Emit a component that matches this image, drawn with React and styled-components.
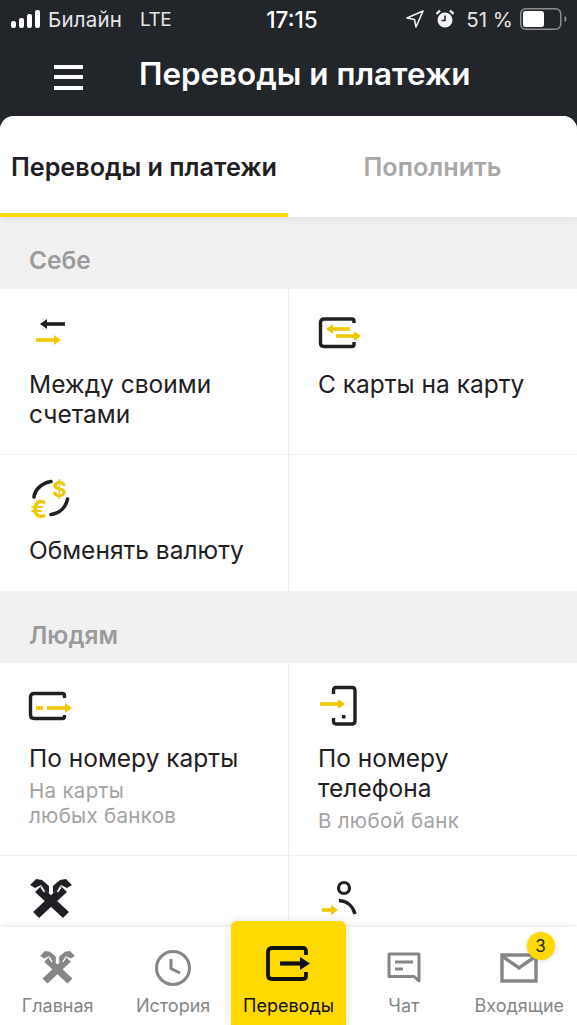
import React from 'react';
import styled, { createGlobalStyle } from 'styled-components';

const YELLOW = '#eec800';
const DARK = '#1f2023';
const GREY = '#868686';

const GlobalStyle = createGlobalStyle`
  html, body {
    margin: 0;
    padding: 0;
    background: #222529;
  }
  * {
    box-sizing: border-box;
  }
`;

const Page = styled.div`
  width: 577px;
  height: 1025px;
  display: flex;
  flex-direction: column;
  overflow: hidden;
  background: #222529;
  font-family: Inter, 'Liberation Sans', sans-serif;
  color: ${DARK};
`;

const StatusBar = styled.div`
  height: 38px;
  padding: 0 10px 0 11px;
  display: grid;
  grid-template-columns: 1fr auto 1fr;
  align-items: center;
  color: #e6e6e6;
  font-size: 20.5px;
`;

const StatusLeft = styled.div`
  display: flex;
  align-items: center;
`;

const Carrier = styled.span`
  margin-left: 7px;
  width: 92px;
  letter-spacing: 0.2px;
`;

const Network = styled.span`
  font-size: 19px;
  letter-spacing: -0.5px;
`;

const Clock = styled.span`
  padding-left: 6px;
  font-size: 22.5px;
  font-weight: 500;
  color: #fff;
`;

const StatusRight = styled.div`
  display: flex;
  align-items: center;
  justify-content: flex-end;
`;

const Percent = styled.span`
  margin: 0 7px 0 12px;
`;

const NavBar = styled.div`
  height: 78px;
  padding-left: 54px;
  display: flex;
  align-items: center;
`;

const Burger = styled.div`
  width: 29px;
  height: 25px;
  margin-right: 56px;
  display: flex;
  flex-direction: column;
  justify-content: space-between;

  span {
    display: block;
    height: 4px;
    background: #fff;
  }
`;

const Title = styled.h1`
  margin: 0 0 6px;
  color: #fff;
  font-size: 31.4px;
  font-weight: 600;
  white-space: nowrap;
`;

const Sheet = styled.div`
  flex: 1;
  min-height: 0;
  overflow: hidden;
  background: #f1f1f1;
  border-radius: 14px 14px 0 0;
`;

const Tabs = styled.div`
  height: 101px;
  display: grid;
  grid-template-columns: 288px 1fr;
  background: #fff;
  box-shadow: 0 2px 8px rgba(0, 0, 0, 0.08);
  position: relative;
`;

const TabItem = styled.div`
  padding-top: 36px;
  text-align: center;
  font-size: 25.2px;
  line-height: 30px;
  font-weight: 600;
  color: ${p => (p.$active ? DARK : '#a8a8a8')};
  border-bottom: 4px solid ${p => (p.$active ? '#ffd900' : 'transparent')};
`;

const SectionLabel = styled.div`
  height: 72px;
  padding-top: ${p => (p.$first ? '28px' : '29px')};
  padding-left: 29px;
  font-size: 24.5px;
  line-height: 30px;
  font-weight: 600;
  color: #9b9b9b;
`;

const Grid = styled.div`
  display: grid;
  grid-template-columns: 289px 288px;
  background: #fff;
`;

const Cell = styled.div`
  padding: 20px 20px ${p => (p.$last ? '26px' : '25px')} 29px;
  border-right: ${p => (p.$right ? 'none' : '1px solid #efefef')};
  border-bottom: ${p => (p.$last ? 'none' : '1px solid #efefef')};
`;

const IconSlot = styled.div`
  height: 44px;
  margin-bottom: 16px;
  margin-left: 1px;

  svg {
    display: block;
    overflow: visible;
  }
`;

const CellTitle = styled.div`
  font-size: 24.5px;
  line-height: 30px;
  white-space: pre-line;
`;

const CellSub = styled.div`
  margin-top: 5px;
  margin-bottom: -3px;
  font-size: 20.5px;
  line-height: 25px;
  color: #a3a3a3;
  white-space: pre-line;
  letter-spacing: 0.3px;
`;

const BottomBar = styled.div`
  flex: none;
  height: 98px;
  display: grid;
  grid-template-columns: repeat(5, 1fr);
  background: #fff;
  box-shadow: 0 -1px 5px rgba(0, 0, 0, 0.1);
  position: relative;
`;

const BarTab = styled.div`
  position: relative;
  display: flex;
  flex-direction: column;
  align-items: center;
  padding-top: ${p => (p.$active ? '27px' : '21px')};
  margin-top: ${p => (p.$active ? '-6px' : '0')};
  background: ${p => (p.$active ? '#ffd900' : 'transparent')};
  border-radius: ${p => (p.$active ? '6px 6px 0 0' : '0')};
  box-shadow: ${p => (p.$active ? '0 0 10px rgba(0, 0, 0, 0.12)' : 'none')};
`;

const BarIcon = styled.div`
  height: 40px;
  display: flex;
  align-items: center;
  justify-content: center;
`;

const BarLabel = styled.span`
  margin-top: 6px;
  font-size: 18px;
  line-height: 24px;
  color: ${p => (p.$active ? '#111' : GREY)};
`;

const Badge = styled.span`
  position: absolute;
  top: 5px;
  left: 65px;
  width: 28px;
  height: 28px;
  border-radius: 50%;
  background: #ffd900;
  box-shadow: 0 1px 4px rgba(0, 0, 0, 0.15);
  display: flex;
  align-items: center;
  justify-content: center;
  font-size: 17px;
  color: #222;
`;

const SignalIcon = () => (
  <svg width="30" height="18" viewBox="0 0 30 18">
    <rect x="0" y="11" width="5" height="7" rx="2" fill="#fff" />
    <rect x="8" y="8" width="5" height="10" rx="2" fill="#fff" />
    <rect x="16" y="4" width="5" height="14" rx="2" fill="#fff" />
    <rect x="24" y="0" width="5" height="18" rx="2" fill="#fff" />
  </svg>
);

const LocationIcon = () => (
  <svg width="18" height="18" viewBox="0 0 18 18" fill="none">
    <path d="M17 1 L1 8 L8.5 9.5 L10 17 Z" stroke="#eee" strokeWidth="1.6" strokeLinejoin="round" />
  </svg>
);

const AlarmSvg = styled.svg`
  margin-left: 12px;
`;

const AlarmIcon = () => (
  <AlarmSvg width="18" height="20" viewBox="0 0 18 20">
    <circle cx="9" cy="11" r="7.5" fill="#f2f2f2" />
    <path d="M9 6.5 V11.5 H5.5" stroke="#222529" strokeWidth="1.6" fill="none" />
    <path d="M0.5 5 L4 1.5 M17.5 5 L14 1.5" stroke="#f2f2f2" strokeWidth="2.4" />
  </AlarmSvg>
);

const BatteryIcon = () => (
  <svg width="47" height="22" viewBox="0 0 47 22">
    <rect x="0.75" y="0.75" width="40" height="20.5" rx="5" fill="none" stroke="#8d8f91" strokeWidth="1.5" />
    <rect x="3" y="3" width="21" height="16" rx="2.5" fill="#fff" />
    <path d="M44.5 8 C46 8.5 46.5 9.5 46.5 11 C46.5 12.5 46 13.5 44.5 14 Z" fill="#8d8f91" />
  </svg>
);

const ArrowLine = ({ x1, x2, y, color, left }) => {
  const tip = left ? x1 : x2;
  const dir = left ? 1 : -1;
  return (
    <g>
      <path d={`M${x1 + (left ? 3 : 0)} ${y} H${x2 - (left ? 0 : 3)}`} stroke={color} strokeWidth="3.6" />
      <path d={`M${tip} ${y} L${tip + dir * 7} ${y - 5} V${y + 5} Z`} fill={color} />
    </g>
  );
};

const BetweenIcon = () => (
  <svg width="60" height="44" viewBox="0 0 60 44">
    <ArrowLine x1={10} x2={35} y={15} color={DARK} left />
    <ArrowLine x1={6} x2={31} y={31} color={YELLOW} />
  </svg>
);

const CardToCardIcon = () => (
  <svg width="60" height="44" viewBox="0 0 60 44" fill="none">
    <path d="M35 14 V12 Q35 10 33 10 H5 Q1.5 10 1.5 13.5 V34 Q1.5 37.5 5 37.5 H33 Q35 37.5 35 35.5 V33" stroke={DARK} strokeWidth="3.4" />
    <ArrowLine x1={7} x2={31} y={20} color={YELLOW} left />
    <ArrowLine x1={17} x2={42} y={27} color={YELLOW} />
  </svg>
);

const ExchangeIcon = () => (
  <svg width="60" height="44" viewBox="0 0 60 44" fill="none">
    <path d="M4 22 C5 14 12 8 21 6.5" stroke={DARK} strokeWidth="3.6" strokeLinecap="round" />
    <path d="M37.5 24 C36 32 30 38 21 39.5" stroke={DARK} strokeWidth="3.6" strokeLinecap="round" />
    <text x="29.5" y="22" fontSize="22" fontWeight="700" fontFamily="Inter, sans-serif" textAnchor="middle" fill={YELLOW}>$</text>
    <text x="9" y="43" fontSize="24" fontWeight="700" fontFamily="Inter, sans-serif" textAnchor="middle" fill={YELLOW}>€</text>
  </svg>
);

const CardNumberIcon = () => (
  <svg width="60" height="44" viewBox="0 0 60 44" fill="none">
    <path d="M34.5 15 V12.5 Q34.5 10.5 32.5 10.5 H4 Q0.5 10.5 0.5 14 V32 Q0.5 35.5 4 35.5 H32.5 Q34.5 35.5 34.5 33.5 V32" stroke={DARK} strokeWidth="3.4" />
    <path d="M6 25 H13" stroke={YELLOW} strokeWidth="3.6" />
    <ArrowLine x1={17} x2={42} y={25} color={YELLOW} />
  </svg>
);

const PhoneIcon = () => (
  <svg width="60" height="44" viewBox="0 0 60 44" fill="none">
    <path d="M14.5 11 V7 Q14.5 4.5 17 4.5 H33 Q36 4.5 36 7.5 V38 Q36 41 33 41 H17 Q14.5 41 14.5 38.5 V35" stroke={DARK} strokeWidth="3.4" />
    <rect x="23" y="32" width="3.5" height="3.5" fill={DARK} />
    <ArrowLine x1={1} x2={26} y={21} color={YELLOW} />
  </svg>
);

const BankLogo = ({ color, size, notch, className }) => (
  <svg className={className} width={size} height={size * 0.95} viewBox="0 0 42 40" fill={color}>
    <path d="M3 33 L9 39 L37 13 L31 7 Z" />
    <path d="M39 33 L33 39 L5 13 L11 7 Z" />
    <path d="M0 6 L6 0 L12 1 L19 7 L19 14 L15 11 L11 6 L5 9 Z" />
    <path d="M42 6 L36 0 L30 1 L23 7 L23 14 L27 11 L31 6 L37 9 Z" />
    <path d="M11 8 L14.5 13 M31 8 L27.5 13" stroke={notch} strokeWidth="1.6" />
  </svg>
);

const RowLogo = styled(BankLogo)`
  margin-top: 3px;
`;

const PersonIcon = () => (
  <svg width="60" height="44" viewBox="0 0 60 44" fill="none">
    <circle cx="25" cy="12" r="5.5" stroke={DARK} strokeWidth="3.2" />
    <path d="M20 24.5 C28 25 34 30 36 38" stroke={DARK} strokeWidth="3.4" />
    <ArrowLine x1={3} x2={19} y={34} color={YELLOW} />
  </svg>
);

const ClockIcon = () => (
  <svg width="36" height="36" viewBox="0 0 36 36" fill="none" stroke={GREY} strokeWidth="3">
    <circle cx="18" cy="18" r="16.5" />
    <path d="M16 9 V18.5 L25 23" />
  </svg>
);

const TransferIcon = () => (
  <svg width="46" height="44" viewBox="0 0 46 44" fill="none">
    <path d="M41 9 V5 Q41 2 38 2 H7 Q3 2 3 6 V29 Q3 33 7 33 H38 Q41 33 41 30 V26" stroke="#111" strokeWidth="3.8" />
    <path d="M15 17.5 H38" stroke="#111" strokeWidth="4.2" />
    <path d="M45 17.5 L35 11 V24 Z" fill="#111" />
  </svg>
);

const ChatIcon = () => (
  <svg width="34" height="32" viewBox="0 0 34 32" fill="none">
    <path d="M2 2 H32 V29 L27 24.5 H2 Z" stroke={GREY} strokeWidth="3" strokeLinejoin="round" />
    <path d="M8 10 H26 M8 17 H16" stroke={GREY} strokeWidth="3" />
  </svg>
);

const MailIcon = () => (
  <svg width="38" height="30" viewBox="0 0 38 30" fill="none" stroke={GREY} strokeWidth="3.4">
    <path d="M2 2 H36 V28 H2 Z" />
    <path d="M2 3 L19 15 L36 3" />
  </svg>
);

const BarEntry = ({ icon, label, active, badge }) => (
  <BarTab $active={active}>
    <BarIcon>{icon}</BarIcon>
    <BarLabel $active={active}>{label}</BarLabel>
    {badge && <Badge>{badge}</Badge>}
  </BarTab>
);

const Item = ({ icon, title, sub, right, last }) => (
  <Cell $right={right} $last={last}>
    <IconSlot>{icon}</IconSlot>
    {title && <CellTitle>{title}</CellTitle>}
    {sub && <CellSub>{sub}</CellSub>}
  </Cell>
);

export default function App() {
  return (
    <Page>
      <GlobalStyle />
      <StatusBar>
        <StatusLeft>
          <SignalIcon />
          <Carrier>Билайн</Carrier>
          <Network>LTE</Network>
        </StatusLeft>
        <Clock>17:15</Clock>
        <StatusRight>
          <LocationIcon />
          <AlarmIcon />
          <Percent>51 %</Percent>
          <BatteryIcon />
        </StatusRight>
      </StatusBar>
      <NavBar>
        <Burger>
          <span />
          <span />
          <span />
        </Burger>
        <Title>Переводы и платежи</Title>
      </NavBar>
      <Sheet>
        <Tabs>
          <TabItem $active>Переводы и платежи</TabItem>
          <TabItem>Пополнить</TabItem>
        </Tabs>
        <SectionLabel $first>Себе</SectionLabel>
        <Grid>
          <Item icon={<BetweenIcon />} title={'Между своими\nсчетами'} />
          <Item icon={<CardToCardIcon />} title="С карты на карту" right />
          <Item icon={<ExchangeIcon />} title="Обменять валюту" last />
          <Item right last />
        </Grid>
        <SectionLabel>Людям</SectionLabel>
        <Grid>
          <Item icon={<CardNumberIcon />} title="По номеру карты" sub={'На карты\nлюбых банков'} />
          <Item icon={<PhoneIcon />} title={'По номеру\nтелефона'} sub="В любой банк" right />
          <Item icon={<RowLogo color={DARK} size={42} notch="#fff" />} />
          <Item icon={<PersonIcon />} right />
        </Grid>
      </Sheet>
      <BottomBar>
        <BarEntry icon={<BankLogo color={GREY} size={35} notch="#fff" />} label="Главная" />
        <BarEntry icon={<ClockIcon />} label="История" />
        <BarEntry icon={<TransferIcon />} label="Переводы" active />
        <BarEntry icon={<ChatIcon />} label="Чат" />
        <BarEntry icon={<MailIcon />} label="Входящие" badge="3" />
      </BottomBar>
    </Page>
  );
}
